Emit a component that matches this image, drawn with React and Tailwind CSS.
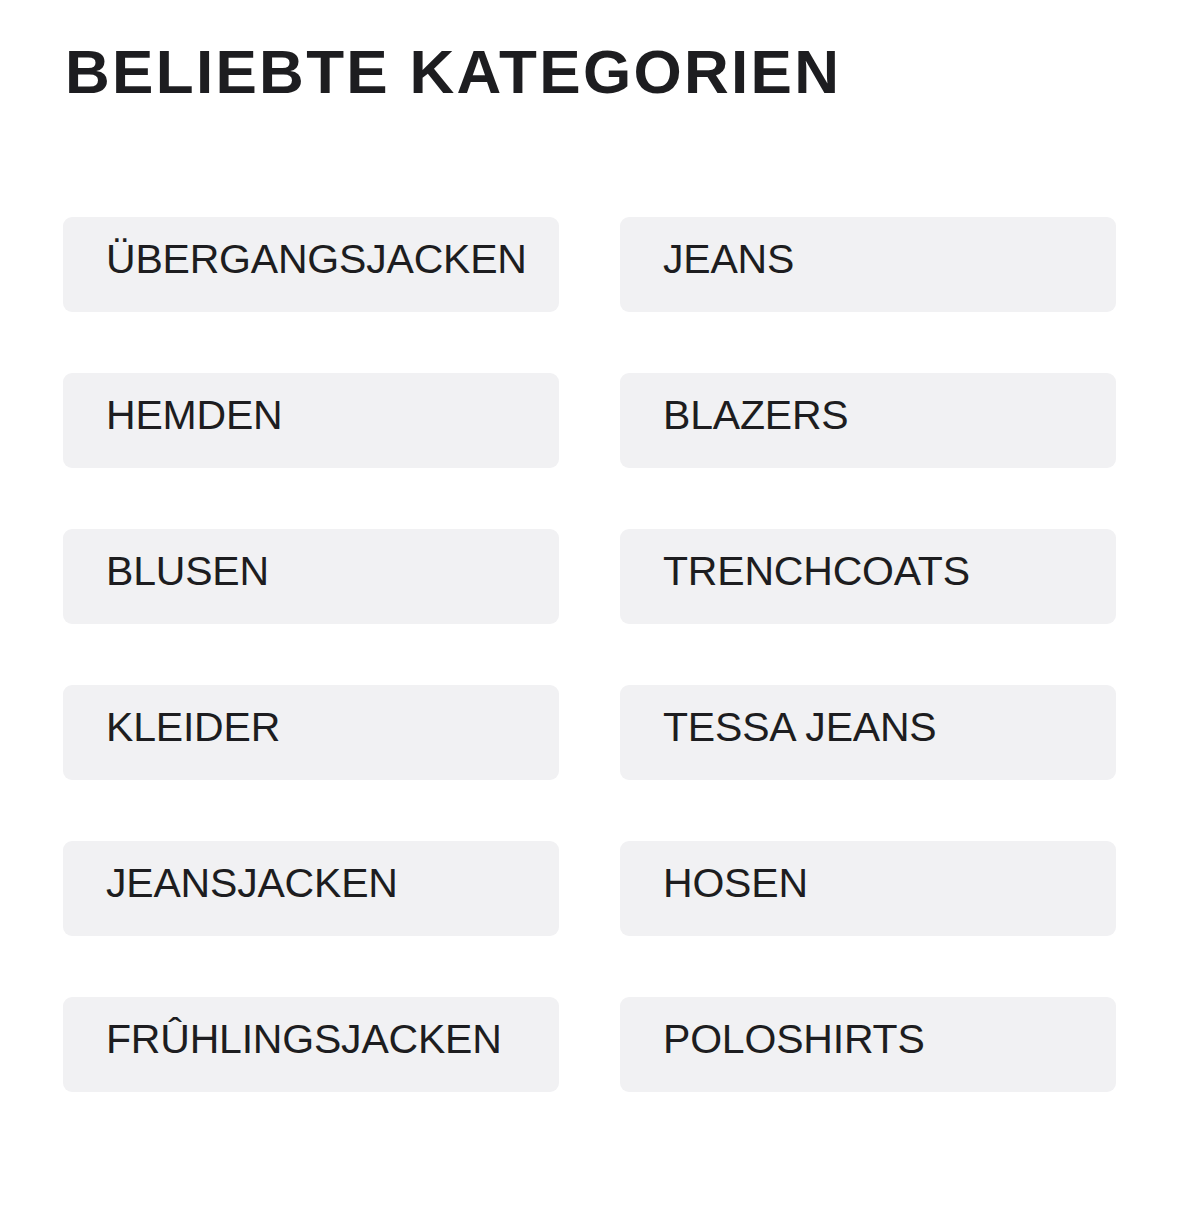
import React from 'react';

const kategorien = [
  'ÜBERGANGSJACKEN',
  'JEANS',
  'HEMDEN',
  'BLAZERS',
  'BLUSEN',
  'TRENCHCOATS',
  'KLEIDER',
  'TESSA JEANS',
  'JEANSJACKEN',
  'HOSEN',
  'FRÛHLINGSJACKEN',
  'POLOSHIRTS',
];

const App = () => {
  return (
    <div className="min-h-[1206px] bg-white px-[63px] pt-[36px] font-['Liberation_Sans',Arial,sans-serif] text-[#1d1d20]">
      <h2 className="ml-[2px] text-[62px] font-bold leading-[72px] tracking-[2.3px]">BELIEBTE KATEGORIEN</h2>

      <div className="mt-[109px] grid grid-cols-2 gap-x-[61px] gap-y-[61px]">
        {kategorien.map((name) => (
          <a
            key={name}
            href="#"
            className="flex h-[95px] items-center rounded-[9px] bg-[#f1f1f3] pl-[43px] pb-[10px] text-[41px] leading-none tracking-[-0.2px]"
          >
            {name}
          </a>
        ))}
      </div>
    </div>
  );
};

export default App;
